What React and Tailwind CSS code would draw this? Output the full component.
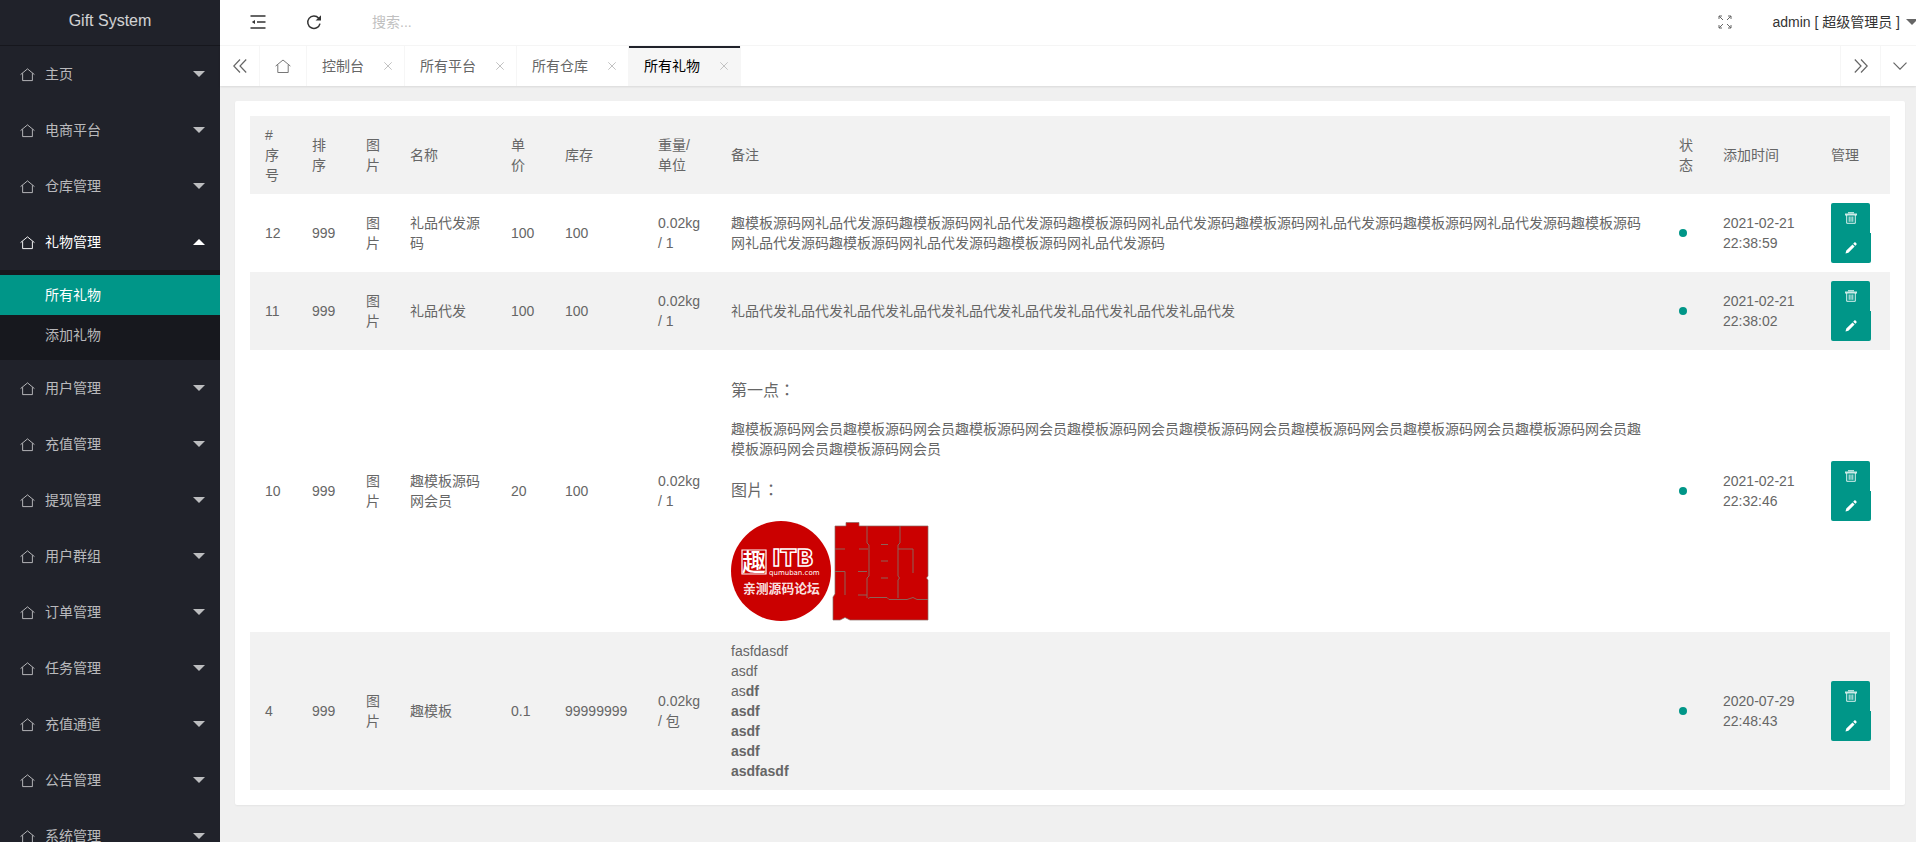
import clsx from "clsx";

const menu = [
  { name: "主页" },
  { name: "电商平台" },
  { name: "仓库管理" },
  { name: "礼物管理", open: true, children: ["所有礼物", "添加礼物"] },
  { name: "用户管理" },
  { name: "充值管理" },
  { name: "提现管理" },
  { name: "用户群组" },
  { name: "订单管理" },
  { name: "任务管理" },
  { name: "充值通道" },
  { name: "公告管理" },
  { name: "系统管理" },
];

const tabs = ["控制台", "所有平台", "所有仓库", "所有礼物"];

const columns = [
  { title: "# 序号", width: "w-[47px]" },
  { title: "排序", width: "w-[54px]" },
  { title: "图片", width: "w-[44px]" },
  { title: "名称", width: "w-[101px]" },
  { title: "单价", width: "w-[54px]" },
  { title: "库存", width: "w-[93px]" },
  { title: "重量/单位", width: "w-[73px]" },
  { title: "备注", width: "w-auto" },
  { title: "状态", width: "w-[44px]" },
  { title: "添加时间", width: "w-[108px]" },
  { title: "管理", width: "w-[74px]" },
];

const HomeIcon = ({ className }) => (
  <svg viewBox="0 0 16 16" className={className} fill="none" stroke="currentColor" strokeLinejoin="round">
    <path d="M.6 8.100 8 2l7.400 6.100M2.800 6.800v7.700h10.400V6.800" />
  </svg>
);

const ShrinkIcon = () => (
  <svg viewBox="0 0 16 14" className="h-3.5 w-4" fill="none" stroke="currentColor" strokeWidth="1.3">
    <path d="M.5 1h15M.5 13h15M7 7h8.5" />
    <path d="M5 5v4L1.800 7z" fill="currentColor" stroke="none" />
  </svg>
);

const RefreshIcon = () => (
  <svg viewBox="0 0 16 16" className="size-4" fill="none" stroke="currentColor" strokeWidth="1.5">
    <path d="M14 9.600A6.200 6.200 0 1 1 12.700 4.200" />
    <path d="M15 1.200v5.400H9.600z" fill="currentColor" stroke="none" />
  </svg>
);

const FullscreenIcon = () => (
  <svg viewBox="0 0 14 14" className="size-3.5" fill="none" stroke="currentColor">
    <path d="M1 4V1h3M1 1l4 4M10 1h3v3M13 1 9 5M1 10v3h3M1 13l4-4M13 10v3h-3M13 13 9 9" />
  </svg>
);

const DoubleArrow = ({ className }) => (
  <svg viewBox="0 0 14 14" className={clsx("size-3.5", className)} fill="none" stroke="currentColor" strokeWidth="1.2">
    <path d="M7 .5.8 7 7 13.5M13.2.5 7 7l6.2 6.5" />
  </svg>
);

const DownArrow = () => (
  <svg viewBox="0 0 14 8" className="h-2 w-3.5" fill="none" stroke="currentColor" strokeWidth="1.2">
    <path d="M.5.7 7 7.200 13.500.7" />
  </svg>
);

const CloseIcon = () => (
  <svg viewBox="0 0 8 8" className="size-2" fill="none" stroke="currentColor">
    <path d="M.3.3 7.700 7.700M7.700.3.3 7.700" />
  </svg>
);

const TrashIcon = () => (
  <svg viewBox="0 0 12 12" className="size-3" fill="none" stroke="currentColor">
    <path d="M0 2.500h12" strokeWidth="2" strokeOpacity=".8" />
    <path d="M3 .8h6" />
    <path d="M1.700 3v8.300h8.600V3M4.200 4.500v5.300M6 4.500v5.300M7.800 4.500v5.300" strokeOpacity=".85" />
  </svg>
);

const PencilIcon = () => (
  <svg viewBox="0 0 12 12" className="size-3" fill="currentColor">
    <path d="M.5 11.500 1.300 8.500 7.500 2.400l2.100 2.100-6.200 6.200zM8.200 1.700l.9-.9c.8-.7 1.400-.5 2 .1s.8 1.200.1 2l-.9.900z" />
  </svg>
);

const Caret = ({ up }) => (
  <svg viewBox="0 0 12 6" className="h-1.5 w-3 shrink-0" fill="currentColor">
    {up ? <path d="M0 6h12L6 0z" /> : <path d="M0 0h12L6 6z" />}
  </svg>
);

const ForumBadge = () => (
  <svg viewBox="0 0 100 100" className="size-[100px]" role="img" aria-label="亲测源码论坛">
    <circle cx="50" cy="50" r="50" fill="#cb0000" />
    <g fill="#fff" fontFamily="'Noto Sans CJK SC', sans-serif">
      <path d="M11 29h24v24H11z" fill="none" stroke="#fff" strokeWidth="1.200" />
      <text x="11" y="50" fontSize="24" fontWeight="500">趣</text>
      <text
        x="41"
        y="45"
        fontSize="23"
        fontWeight="700"
        fill="none"
        stroke="#fff"
        strokeWidth="1.500"
        fontFamily="'DejaVu Sans', sans-serif"
      >
        ITB
      </text>
      <text x="38" y="54" fontSize="7" fontFamily="'DejaVu Sans', sans-serif">qumuban.com</text>
      <text x="12" y="72" fontSize="12.800" fontWeight="700" fillOpacity=".9">亲测源码论坛</text>
    </g>
  </svg>
);

const ForumBlock = () => (
  <svg viewBox="0 0 100 100" className="size-[100px]" aria-hidden="true">
    <path
      d="M4 5h11V1.500h13V5h69v50l-1.500 2 1.500 2v40H19l-5-2.500L9 99H2V76l2-3z"
      fill="#cb0000"
      stroke="#8a6a64"
      strokeWidth=".7"
    />
    <path
      d="M36 5v17l2 2v31l-2 2v20M69 5v17l-2 2v31l1.500 2-1.500 2v18M4 28h10M28 28h9M67 28h15v24M4 50.500h10V74M27 50.500h9M27 74h9M50 23.500h7M50 40h7M50 57h7M37 77.500l2-1h17l2 2h18l6-2 4 2h11"
      fill="none"
      stroke="#8c6258"
    />
  </svg>
);

const rows = [
  {
    id: 12,
    name: "礼品代发源码",
    price: "100",
    stock: "100",
    weight: "0.02kg / 1",
    remark: "趣模板源码网礼品代发源码".repeat(8),
    time: "2021-02-21 22:38:59",
  },
  {
    id: 11,
    name: "礼品代发",
    price: "100",
    stock: "100",
    weight: "0.02kg / 1",
    remark: "礼品代发".repeat(9),
    time: "2021-02-21 22:38:02",
  },
  {
    id: 10,
    name: "趣模板源码网会员",
    price: "20",
    stock: "100",
    weight: "0.02kg / 1",
    remark: (
      <div className="flex flex-col gap-5 pt-5">
        <h3 className="font-['Noto_Sans_CJK_TC',sans-serif] text-base leading-5">第一点：</h3>
        <p>{"趣模板源码网会员".repeat(10)}</p>
        <h3 className="font-['Noto_Sans_CJK_TC',sans-serif] text-base leading-5">图片：</h3>
        <div className="flex py-0.5">
          <ForumBadge />
          <ForumBlock />
        </div>
      </div>
    ),
    time: "2021-02-21 22:32:46",
  },
  {
    id: 4,
    name: "趣模板",
    price: "0.1",
    stock: "99999999",
    weight: "0.02kg / 包",
    remark: (
      <>
        <p>fasfdasdf</p>
        <p>asdf</p>
        <p>as<b>df</b></p>
        <p className="font-bold">asdf</p>
        <p className="font-bold">asdf</p>
        <p className="font-bold">asdf</p>
        <p className="font-bold">asdfasdf</p>
      </>
    ),
    time: "2020-07-29 22:48:43",
  },
];

const Sidebar = () => (
  <aside className="flex w-[220px] shrink-0 flex-col overflow-hidden bg-[#20222a] text-white/70">
    <div className="flex h-[46px] shrink-0 items-center justify-center border-b border-black/30 pb-1 text-base text-white/80">
      Gift System
    </div>
    <nav>
      {menu.map((item) => (
        <div key={item.name}>
          <a
            href="#"
            className={clsx("flex h-14 items-center pr-[15px] pl-5", item.open && "text-white")}
          >
            <HomeIcon className="mr-2.5 size-[15px]" />
            <span className="flex-1">{item.name}</span>
            <Caret up={item.open} />
          </a>
          {item.children && (
            <div className="bg-[#17181e] py-[5px]">
              {item.children.map((child, i) => (
                <a
                  key={child}
                  href="#"
                  className={clsx("block h-10 pl-[45px] leading-10", i === 0 && "bg-[#009688] text-white")}
                >
                  {child}
                </a>
              ))}
            </div>
          )}
        </div>
      ))}
    </nav>
  </aside>
);

const Header = () => (
  <header className="flex h-[46px] items-center border-b border-[#f6f6f6] bg-white pb-0.5 text-[#333]">
    <button type="button" aria-label="侧边伸缩" className="flex w-[76px] justify-center">
      <ShrinkIcon />
    </button>
    <button type="button" aria-label="刷新" className="flex w-9 justify-center">
      <RefreshIcon />
    </button>
    <input
      type="text"
      aria-label="搜索"
      placeholder="搜索..."
      className="ml-10 w-48 outline-none placeholder:text-[#c0c0c0]"
    />
    <button type="button" aria-label="全屏" className="mr-10 ml-auto text-[#666]">
      <FullscreenIcon />
    </button>
    <button type="button" className="-mr-0.5 flex items-center gap-1.5 whitespace-nowrap">
      admin [ 超级管理员 ]
      <span className="text-[#666]">
        <Caret />
      </span>
    </button>
  </header>
);

const TabBar = () => (
  <div className="relative flex h-10 bg-white text-[#666] shadow-[0_1px_2px_rgba(0,0,0,0.1)]">
    <button type="button" aria-label="向左" className="flex w-10 items-center justify-center border-r border-[#f6f6f6]">
      <DoubleArrow />
    </button>
    <button type="button" aria-label="首页" className="flex w-[47px] items-center justify-center border-r border-[#f6f6f6] text-[#777]">
      <HomeIcon className="size-4" />
    </button>
    {tabs.map((tab) => {
      const active = tab === "所有礼物";
      return (
        <div
          key={tab}
          className={clsx(
            "relative flex items-center border-r border-[#f6f6f6] pr-3 pl-[15px]",
            active && "bg-[#f6f6f6] text-black"
          )}
        >
          {active && <span className="absolute inset-x-0 top-0 h-0.5 bg-[#20222a]" />}
          <a href="#">{tab}</a>
          <button type="button" aria-label="关闭" className="ml-5 text-[#c2c2c2]">
            <CloseIcon />
          </button>
        </div>
      );
    })}
    <button
      type="button"
      aria-label="向右"
      className="ml-auto flex w-10 items-center justify-center border-l border-[#f6f6f6]"
    >
      <DoubleArrow className="rotate-180" />
    </button>
    <button
      type="button"
      aria-label="更多"
      className="flex w-9 items-center justify-center border-l border-[#f6f6f6] pl-0.5"
    >
      <DownArrow />
    </button>
  </div>
);

const GiftTable = () => (
  <table className="w-full table-fixed text-left text-[#666]">
    <colgroup>
      {columns.map((col) => (
        <col key={col.title} className={col.width} />
      ))}
    </colgroup>
    <thead>
      <tr className="bg-[#f2f2f2]">
        {columns.map((col) => (
          <th key={col.title} className="px-[15px] py-[9px] font-normal">
            {col.title}
          </th>
        ))}
      </tr>
    </thead>
    <tbody>
      {rows.map((row) => (
        <tr key={row.id} className="even:bg-[#f2f2f2] [&>td]:px-[15px] [&>td]:py-[9px]">
          <td>{row.id}</td>
          <td>999</td>
          <td>图片</td>
          <td>{row.name}</td>
          <td>{row.price}</td>
          <td>{row.stock}</td>
          <td>{row.weight}</td>
          <td>{row.remark}</td>
          <td>
            <span className="block size-2 rounded-full bg-[#009688]" />
          </td>
          <td>{row.time}</td>
          <td>
            <div className="flex w-10 flex-col text-white">
              <button
                type="button"
                aria-label="删除"
                className="mr-px flex h-[30px] items-center justify-center rounded-t-xs bg-[#009688]"
              >
                <TrashIcon />
              </button>
              <button
                type="button"
                aria-label="编辑"
                className="flex h-[30px] items-center justify-center rounded-b-xs bg-[#009688]"
              >
                <PencilIcon />
              </button>
            </div>
          </td>
        </tr>
      ))}
    </tbody>
  </table>
);

const App = () => {
  return (
    <div className="flex h-screen overflow-hidden bg-[#f0f0f0] font-['Liberation_Sans','Noto_Sans_CJK_SC',sans-serif] text-sm leading-5">
      <Sidebar />
      <div className="flex min-w-0 flex-1 flex-col">
        <Header />
        <TabBar />
        <main className="flex-1 overflow-hidden py-[15px] pr-[11px] pl-[15px]">
          <div className="rounded-xs bg-white p-[15px] shadow-[0_1px_2px_rgba(0,0,0,0.05)]">
            <GiftTable />
          </div>
        </main>
      </div>
    </div>
  );
};

export default App;
